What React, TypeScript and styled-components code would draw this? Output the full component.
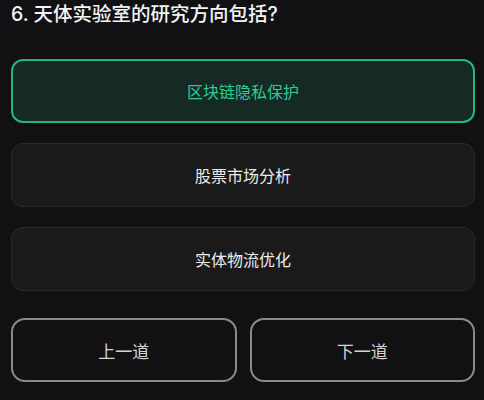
import React from "react";
import styled, { createGlobalStyle } from "styled-components";

const Global = createGlobalStyle`
  html, body { margin: 0; padding: 0; background: #111113; }
  body { font-family: "Inter", "Noto Sans CJK SC", sans-serif; }
  * { box-sizing: border-box; }
`;

const Page = styled.div`
  width: 484px;
  height: 400px;
  padding: 0 9px 0 11px;
  display: flex;
  flex-direction: column;
`;

const Title = styled.h2`
  margin: 0;
  font-family: "Inter", "Noto Sans CJK SC", sans-serif;
  font-size: 19.5px;
  line-height: 28px;
  font-weight: 500;
  color: #f4f4f4;
`;

const Options = styled.div`
  margin-top: 31px;
  display: flex;
  flex-direction: column;
  gap: 20px;
`;

const Option = styled.div<{ $selected?: boolean }>`
  height: 64px;
  border-radius: 12px;
  display: flex;
  align-items: center;
  justify-content: center;
  font-size: 16px;
  font-weight: 400;
  border: ${(p) => (p.$selected ? "2px solid #25b584" : "1px solid #2a2a2c")};
  background: ${(p) => (p.$selected ? "#162a25" : "#1a1a1b")};
  color: ${(p) => (p.$selected ? "#2ccc94" : "#ececec")};
`;

const Nav = styled.div`
  margin-top: 27px;
  display: grid;
  grid-template-columns: 1fr 1fr;
  gap: 13px;
`;

const NavButton = styled.button`
  height: 64px;
  border-radius: 14px;
  border: 2px solid #8a8a8c;
  background: transparent;
  color: #d4d4d4;
  font-family: "Inter", "Noto Sans CJK SC", sans-serif;
  font-size: 17px;
  font-weight: 400;
`;

const options = ["区块链隐私保护", "股票市场分析", "实体物流优化"];

export default function App() {
  return (
    <>
      <Global />
      <Page>
        <Title>6. 天体实验室的研究方向包括?</Title>
        <Options>
          {options.map((o, i) => (
            <Option key={o} $selected={i === 0}>
              {o}
            </Option>
          ))}
        </Options>
        <Nav>
          <NavButton>上一道</NavButton>
          <NavButton>下一道</NavButton>
        </Nav>
      </Page>
    </>
  );
}
